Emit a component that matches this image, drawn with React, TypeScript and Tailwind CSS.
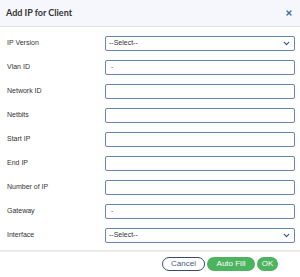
import { ChevronDown, X } from 'lucide-react';

const rows: { label: string; kind: 'select' | 'input'; value?: string }[] = [
  { label: 'IP Version', kind: 'select' },
  { label: 'Vlan ID', kind: 'input', value: '-' },
  { label: 'Network ID', kind: 'input' },
  { label: 'Netbits', kind: 'input' },
  { label: 'Start IP', kind: 'input' },
  { label: 'End IP', kind: 'input' },
  { label: 'Number of IP', kind: 'input' },
  { label: 'Gateway', kind: 'input', value: '-' },
  { label: 'Interface', kind: 'select' },
];

export default function App() {
  return (
    <div className="w-[300px] h-[277px] bg-white flex flex-col overflow-hidden font-['Liberation_Sans',Arial,sans-serif]">
      {/* header */}
      <div className="h-[27px] shrink-0 bg-[#f6f7fc] border-b border-[#dfe1e8] flex items-center justify-between pl-[6px] pr-[7px]">
        <h1 className="font-['Lato',sans-serif] font-bold text-[9px] text-[#333]">Add IP for Client</h1>
        <X size={8} strokeWidth={4} className="text-[#3d6fb0]" />
      </div>

      {/* body */}
      <div className="flex-1 flex flex-col gap-[9px] pt-[9px] pl-[7px] pr-[5px]">
        {rows.map((r) => (
          <div key={r.label} className="flex items-center h-[15px]">
            <span className="w-[98px] text-[7px] text-[#333]">{r.label}</span>
            {r.kind === 'select' ? (
              <div className="flex-1 h-[15px] border border-[#6584b8] rounded-[2px] flex items-center justify-between px-[3px]">
                <span className="text-[7px] text-[#333]">--Select--</span>
                <ChevronDown size={9} strokeWidth={3} className="text-[#34507f]" />
              </div>
            ) : (
              <div className="flex-1 h-[15px] border border-[#6584b8] rounded-[2px] flex items-center px-[5px]">
                <span className="text-[7px] text-[#666]">{r.value ?? ''}</span>
              </div>
            )}
          </div>
        ))}
      </div>

      {/* footer */}
      <div className="h-[27px] shrink-0 border-t-2 border-[#ececec] flex items-center justify-end gap-[2px] pr-[22px] pb-[1px]">
        <button className="h-[14px] w-[43px] rounded-full border border-[#3b4a6b] text-[8px] text-[#4a5a78] bg-white">Cancel</button>
        <button className="h-[14px] w-[48px] rounded-full bg-[#4db35e] text-[8px] text-white">Auto Fill</button>
        <button className="h-[14px] w-[21px] rounded-full bg-[#4db35e] text-[8px] text-white">OK</button>
      </div>
    </div>
  );
}
